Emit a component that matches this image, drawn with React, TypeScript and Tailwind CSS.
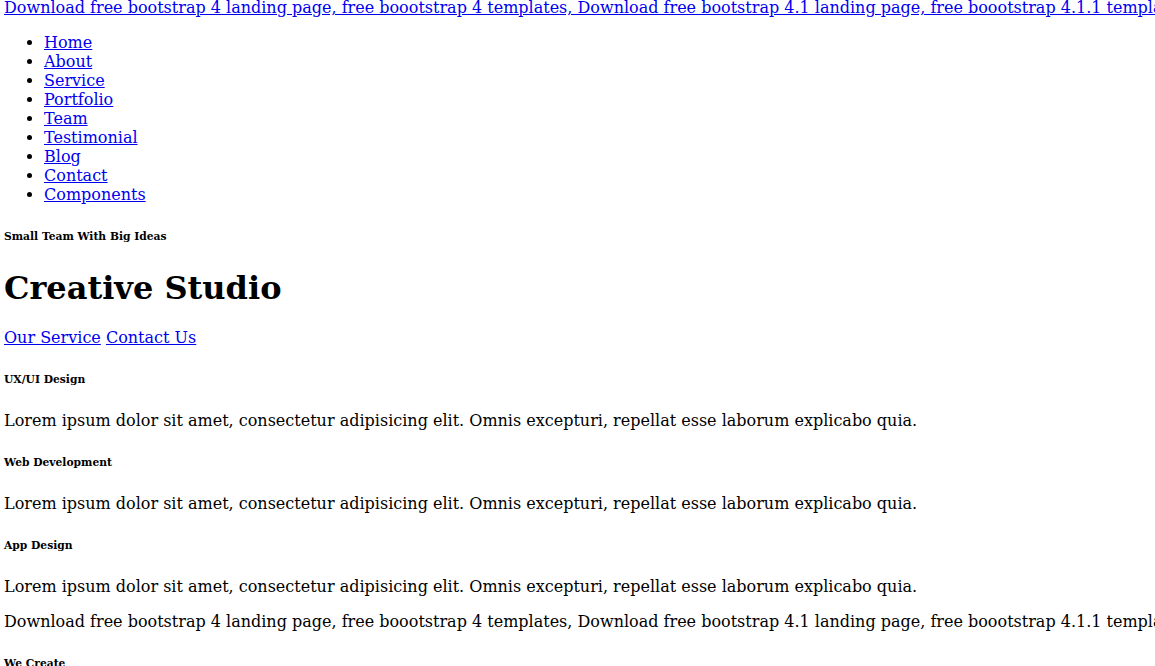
import React from "react";

const serif = "font-['DejaVu_Serif',serif]";

function H6({ children, first }: { children: React.ReactNode; first?: boolean }) {
  return (
    <h6
      className={
        first
          ? "text-[10.72px] font-bold leading-[13px] pt-[1px] mt-[25px] mb-[26px]"
          : "text-[10.72px] font-bold leading-[13px] pt-[1px] my-[25px]"
      }
    >
      {children}
    </h6>
  );
}

function P({ children }: { children: React.ReactNode }) {
  return <p className="text-[16px] leading-[19px] my-4 whitespace-nowrap">{children}</p>;
}

export default function App() {
  const nav = ["Home", "About", "Service", "Portfolio", "Team", "Testimonial", "Blog", "Contact", "Components"];
  const lorem =
    "Lorem ipsum dolor sit amet, consectetur adipisicing elit. Omnis excepturi, repellat esse laborum explicabo quia.";
  const dl =
    "Download free bootstrap 4 landing page, free boootstrap 4 templates, Download free bootstrap 4.1 landing page, free boootstrap 4.1.1 templates, Creative studio Landing page";
  return (
    <div className={`${serif} text-black bg-white w-[1155px] h-[666px] overflow-hidden text-[16px] leading-[19px]`}>
      <div className="px-1 mt-[-2px]">
        <div className="whitespace-nowrap">
          <a href="#" className="text-[#0000ee] underline">{dl}</a>
        </div>
        <ul className="list-disc pl-10 my-4">
          {nav.map((n) => (
            <li key={n}>
              <a href="#" className="text-[#0000ee] underline">{n}</a>
            </li>
          ))}
        </ul>
        <H6 first>Small Team With Big Ideas</H6>
        <h1 className="text-[32px] font-bold leading-[38px] my-[21.44px]">Creative Studio</h1>
        <P>
          <a href="#" className="text-[#0000ee] underline">Our Service</a>{" "}
          <a href="#" className="text-[#0000ee] underline">Contact Us</a>
        </P>
        <H6>UX/UI Design</H6>
        <P>{lorem}</P>
        <H6>Web Development</H6>
        <P>{lorem}</P>
        <H6>App Design</H6>
        <P>{lorem}</P>
        <P>{dl}</P>
        <H6>We Create</H6>
      </div>
    </div>
  );
}
